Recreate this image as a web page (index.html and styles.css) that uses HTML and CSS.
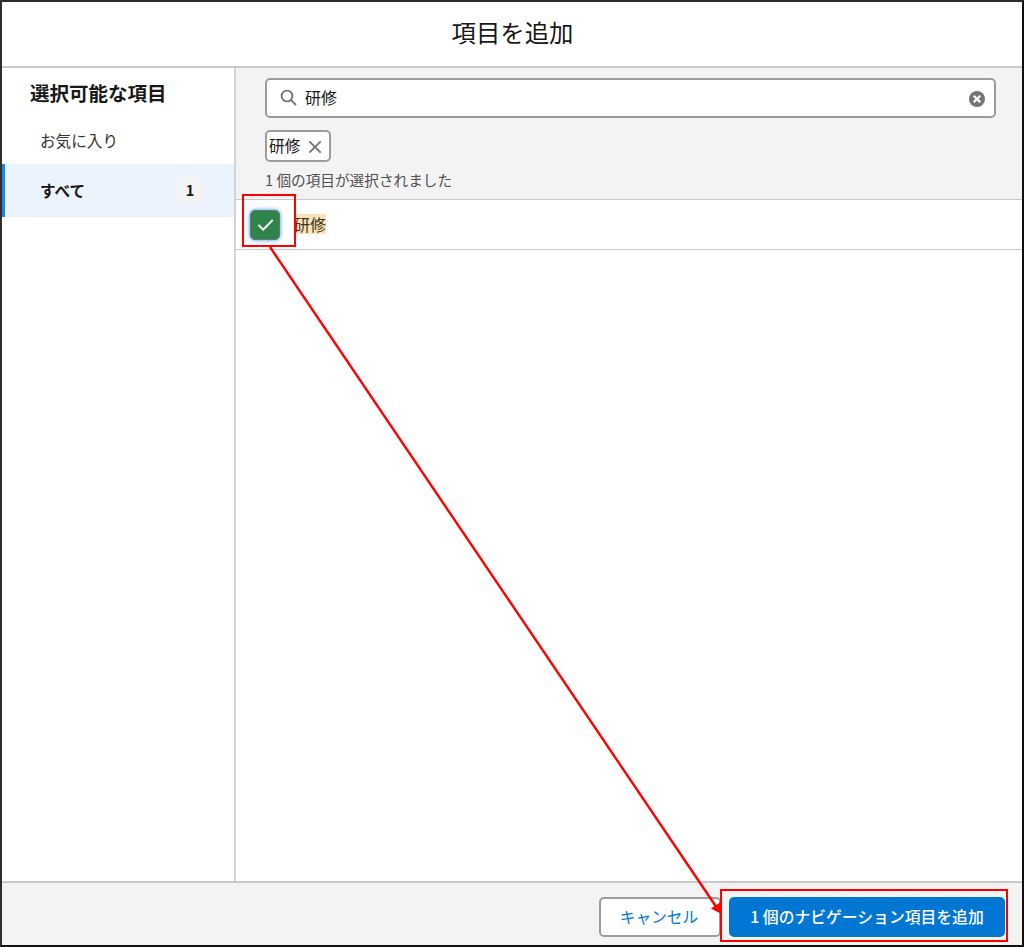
FILE: index.html
```html
<!DOCTYPE html>
<html lang="ja">
<head>
<meta charset="utf-8">
<title>項目を追加</title>
<link rel="stylesheet" href="styles.css">
</head>
<body>
<div class="modal">
  <header class="modal-header"><h1 class="modal-title">項目を追加</h1></header>
  <div class="modal-body">
    <nav class="sidebar">
      <h2 class="sidebar-title">選択可能な項目</h2>
      <div class="nav-item">お気に入り</div>
      <div class="nav-item nav-active"><span>すべて</span><span class="badge">1</span></div>
    </nav>
    <main class="content">
      <section class="filters">
        <div class="search">
          <svg class="search-icon" viewBox="0 0 18 18"><circle cx="7" cy="7" r="5.4"/><path d="M10.8 10.8 16 16"/></svg>
          <span class="search-text">研修</span>
          <svg class="clear-icon" viewBox="0 0 16 16"><circle cx="8" cy="8" r="8"/><path d="m4.7 4.7 6.6 6.6m0-6.6-6.6 6.6"/></svg>
        </div>
        <div class="pill"><span class="pill-text">研修</span><svg class="pill-close" viewBox="0 0 14 14"><path d="m1.3 1.3 11.4 11.4m0-11.4L1.3 12.7"/></svg></div>
        <p class="count">1 個の項目が選択されました</p>
      </section>
      <div class="row">
        <span class="checkbox"><svg class="check" viewBox="0 0 16 12"><path d="m1 6 4.7 4.6L15.2 1"/></svg></span>
        <mark class="match">研修</mark>
      </div>
    </main>
  </div>
  <footer class="modal-footer">
    <button class="button cancel">キャンセル</button>
    <button class="button submit">1 個のナビゲーション項目を追加</button>
  </footer>
</div>
<svg class="annotations" viewBox="0 0 1024 947">
  <rect x="243" y="195" width="52" height="51"/>
  <rect x="721" y="890" width="286" height="51"/>
  <path class="arrow" d="M270 247 717 908"/>
  <path class="arrowhead" d="M721.5 914V901.5L711 908.5Z"/>
</svg>
</body>
</html>
```
FILE: styles.css
```css
* { box-sizing: border-box; }
body {
  margin: 0;
  font-family: "Noto Sans CJK JP", sans-serif;
  color: #181818;
}
.modal {
  width: 1024px;
  height: 947px;
  border: 2px solid #2d2d2d;
  border-bottom-color: #111;
  border-right-color: #111;
  display: flex;
  flex-direction: column;
  background: #fff;
}
.modal-header {
  height: 66px;
  border-bottom: 2px solid #c9c9c9;
  display: flex;
  justify-content: center;
}
.modal-title {
  margin: 0;
  padding-left: 1px;
  font-size: 24.4px;
  font-weight: 400;
  line-height: 59px;
}
.modal-body { flex: 1; display: flex; }
.sidebar {
  width: 234px;
  border-right: 2px solid #d4d4d4;
}
.sidebar-title {
  margin: 0;
  padding-left: 28px;
  height: 47px;
  font-size: 19.5px;
  line-height: 50px;
}
.nav-item {
  height: 49px;
  padding: 1px 0 0 38px;
  display: flex;
  align-items: center;
  font-size: 15.6px;
  color: #333;
}
.nav-active {
  height: 53px;
  padding: 0 29px 1px 35px;
  border-left: 3px solid #1b83f2;
  justify-content: space-between;
  background: #ebf3fe;
  color: #181818;
  font-weight: 700;
}
.badge {
  width: 30px;
  height: 30px;
  border-radius: 50%;
  background: #f3f3f3;
  font-size: 14.5px;
  line-height: 30px;
  text-align: center;
}
.content { flex: 1; }
.filters {
  height: 132px;
  padding: 10px 26px 0 29px;
  background: #f3f3f3;
  border-bottom: 1px solid #c9c9c9;
}
.search {
  height: 40px;
  padding: 0 9px 0 13px;
  display: flex;
  align-items: center;
  border: 2px solid #9c9c9c;
  border-radius: 5px;
  background: #fff;
}
.search-icon, .pill-close, .check {
  fill: none;
  stroke: #747474;
  stroke-width: 1.9;
}
.search-icon { width: 18px; height: 18px; }
.search-text { margin: 0 0 2px 7px; font-size: 16px; }
.clear-icon { width: 16px; height: 16px; margin: 2px 0 0 auto; fill: #747474; stroke: #fff; stroke-width: 2.2; }
.clear-icon circle { stroke: none; }
.pill {
  width: 66px;
  height: 32px;
  margin-top: 12px;
  padding: 0 7px 0 2px;
  display: flex;
  align-items: center;
  justify-content: space-between;
  border: 2px solid #9c9c9c;
  border-radius: 5px;
  background: #fff;
  font-size: 15.7px;
}
.pill-text { margin-bottom: 1px; }
.pill-close { width: 14px; height: 14px; margin-top: 1px; }
.count {
  margin: 0;
  padding-top: 7px;
  font-size: 14.65px;
  line-height: 22px;
  color: #505050;
}
.row {
  height: 50px;
  padding: 0 0 1px 14px;
  display: flex;
  align-items: center;
  border-bottom: 1px solid #c9c9c9;
}
.checkbox {
  width: 30px;
  height: 30px;
  margin-top: 1px;
  display: flex;
  align-items: center;
  justify-content: center;
  border: 1px solid #60787a;
  border-radius: 5px;
  background: #2e844a;
  box-shadow: 0 0 4px #3c8ae8;
}
.check { width: 17px; height: 12px; stroke: #fff; }
.match {
  margin-left: 14px;
  height: 20px;
  background: #f9e3b6;
  color: #3b3528;
  font-size: 16px;
  line-height: 20px;
}
.modal-footer {
  height: 64px;
  padding: 14px 17px 0;
  display: flex;
  justify-content: flex-end;
  gap: 8px;
  border-top: 2px solid #c9c9c9;
  background: #f3f3f3;
}
.button {
  height: 40px;
  padding: 0 0 1px;
  border: 2px solid #9c9c9c;
  border-radius: 5px;
  background: #fff;
  font-family: inherit;
  font-size: 15.7px;
  white-space: nowrap;
}
.cancel { width: 122px; padding-right: 2px; color: #0176d3; }
.submit { width: 276px; border-color: #0176d3; background: #0176d3; color: #fff; font-size: 15.8px; font-weight: 500; }
.annotations {
  position: absolute;
  left: 0;
  top: 0;
  width: 1024px;
  height: 947px;
  fill: none;
  stroke: #f00;
  stroke-width: 2;
  pointer-events: none;
}
.arrow { stroke-width: 2.4; }
.arrowhead { fill: #f00; stroke: none; }
```
